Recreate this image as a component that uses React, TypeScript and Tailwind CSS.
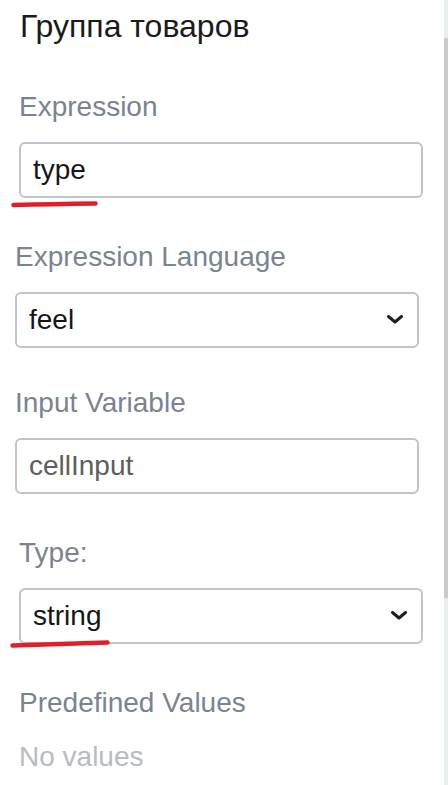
import { ReactNode } from "react";

const Label = ({ children, className = "" }: { children: ReactNode; className?: string }) => (
  <div className={`text-[28px] leading-[32px] text-[#7a8394] ${className}`}>{children}</div>
);

const Chevron = () => (
  <svg width="16" height="9" viewBox="0 0 16 9" className="-mt-[2px] shrink-0">
    <path d="M1.5 1.5 L8 7 L14.5 1.5" fill="none" stroke="#1f1f1f" strokeWidth="3" strokeLinecap="round" strokeLinejoin="round" />
  </svg>
);

const Box = ({
  value,
  select,
  muted,
  children,
}: {
  value: string;
  select?: boolean;
  muted?: boolean;
  children?: ReactNode;
}) => (
  <div className="relative mt-[19px]">
    <div className="h-[56px] rounded-[6px] border-2 border-[#bfc3cc] bg-white pl-[12px] pr-[14px] flex items-center justify-between">
      <span className={`text-[28px] leading-[32px] ${muted ? "text-[#5e5e5e]" : "text-[#161616]"}`}>{value}</span>
      {select && <Chevron />}
    </div>
    {children}
  </div>
);

export default function App() {
  return (
    <div className="flex w-[448px] h-[785px] overflow-hidden bg-white font-['Liberation_Sans',Arial,sans-serif]">
      <div className="flex-1 flex flex-col">
        <h2 className="pl-[20px] pt-[8px] text-[32px] leading-[36px] text-[#1b1b1b]">Группа товаров</h2>

        <div className="pl-[19px] pr-[21px] mt-[47px]">
          <Label>Expression</Label>
          <Box value="type">
            <svg width="90" height="12" viewBox="0 0 90 12" className="absolute left-[-8px] top-[56px]">
              <path d="M2.5 7 Q40 6 84.5 5.5" fill="none" stroke="#e01f2b" strokeWidth="4.5" strokeLinecap="round" />
            </svg>
          </Box>
        </div>

        <div className="pl-[15px] pr-[25px] mt-[43px]">
          <Label>Expression Language</Label>
          <Box value="feel" select />
          <Label className="mt-[39px]">Input Variable</Label>
          <Box value="cellInput" muted />
        </div>

        <div className="pl-[19px] pr-[21px] mt-[43px]">
          <Label>Type:</Label>
          <Box value="string" select>
            <svg width="104" height="12" viewBox="0 0 104 12" className="absolute left-[-10px] top-[50px]">
              <path d="M3.5 7.5 Q50 6 98.5 4.5" fill="none" stroke="#e01f2b" strokeWidth="4.5" strokeLinecap="round" />
            </svg>
          </Box>
          <Label className="mt-[43px]">Predefined Values</Label>
          <div className="mt-[22px] text-[28px] leading-[32px] text-[#b6bbc5]">No values</div>
        </div>
      </div>

      <div className="w-[4px] flex flex-col bg-[#e9eef0]">
        <div className="h-[38px]" />
        <div className="h-[560px] bg-[#cbcbcb]" />
        <div className="flex-1" />
      </div>
    </div>
  );
}
